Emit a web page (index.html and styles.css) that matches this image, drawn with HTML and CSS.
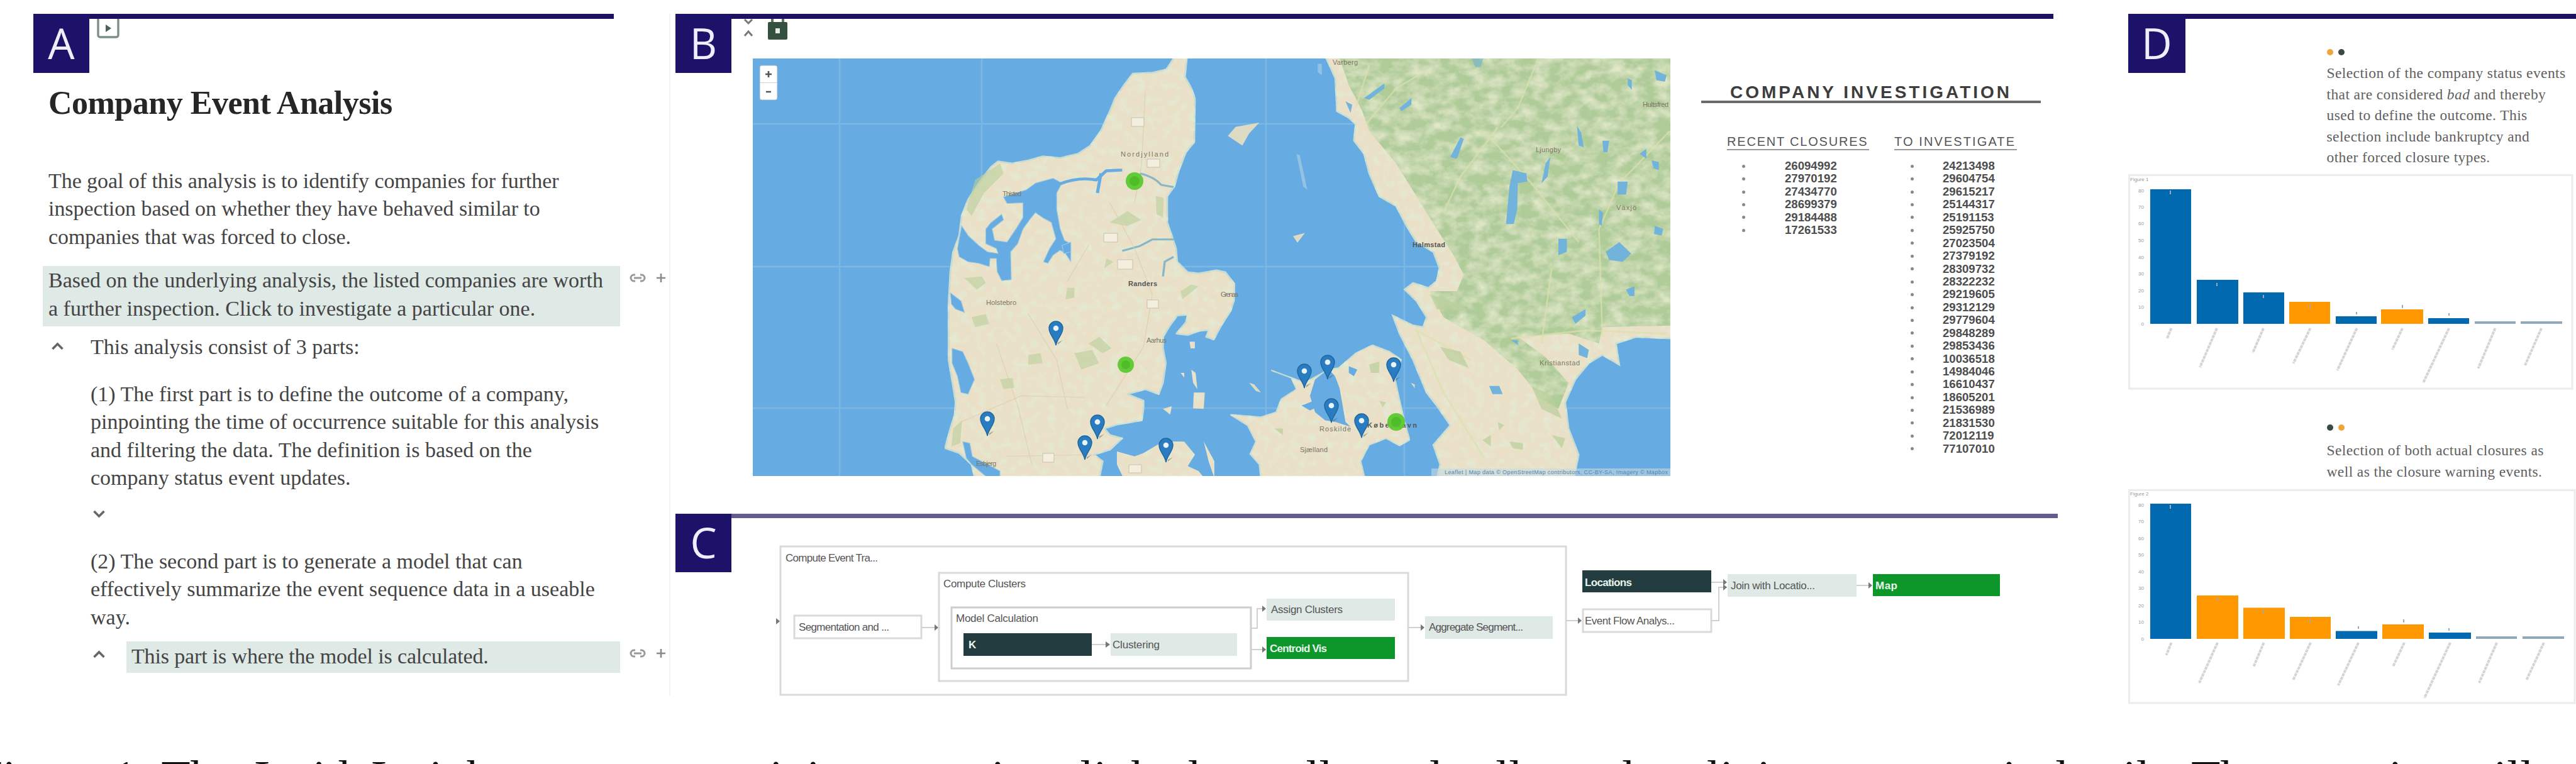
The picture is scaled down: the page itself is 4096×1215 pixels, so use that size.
FILE: index.html
```html
<!DOCTYPE html>
<html lang="en">
<head>
<meta charset="utf-8">
<title>InsideInsights</title>
<link rel="stylesheet" href="styles.css">
</head>
<body>
<svg class="defs" width="0" height="0">
  <defs>
    <symbol id="up" viewBox="0 0 20 13"><path d="M2 11 10 3l8 8" fill="none" stroke="#666" stroke-width="3.6"/></symbol>
    <symbol id="down" viewBox="0 0 20 13"><path d="M2 2l8 8 8-8" fill="none" stroke="#666" stroke-width="3.6"/></symbol>
    <symbol id="tools" viewBox="0 0 58 16">
      <path d="M9 3H7a5 5 0 0 0 0 10h2M17 3h2a5 5 0 0 1 0 10h-2M7 8h12" fill="none" stroke="#999" stroke-width="3"/>
      <path d="M43 8h14M50 1v14" stroke="#8a8a8a" stroke-width="2.6"/>
    </symbol>
    <symbol id="pin" viewBox="-12 -13 24 40" overflow="visible">
      <path d="M3 25 11 18 3 22z" fill="#555" opacity=".45"/>
      <path d="M0 26C-2 15-11 9-11-1a11 11 0 0 1 22 0C11 9 2 15 0 26z" fill="#2a7cc0" stroke="#1f669f" stroke-width="1.4"/>
      <circle r="4.3" cy="-1" fill="#e8f3fb"/>
    </symbol>
  </defs>
</svg>
<main class="page">
  <section class="panel-a">
    <header class="bar"><span class="tag">A</span>
      <svg class="play" viewBox="0 0 36 32"><rect x="2" y="-3" width="32" height="32" rx="3" fill="none" stroke="#7b8f86" stroke-width="3.4"/><path d="M14 9l9 6-9 6z" fill="#4d6359"/></svg>
    </header>
    <h1>Company Event Analysis</h1>
    <p class="intro">The goal of this analysis is to identify companies for further<br>inspection based on whether they have behaved similar to<br>companies that was forced to close.</p>
    <div class="row listed"><p class="hl">Based on the underlying analysis, the listed companies are worth<br>a further inspection. Click to investigate a particular one.</p><svg class="tools"><use href="#tools"/></svg></div>
    <div class="row parts"><svg class="chev"><use href="#up"/></svg><p>This analysis consist of 3 parts:</p></div>
    <p class="first">(1) The first part is to define the outcome of a company,<br>pinpointing the time of occurrence suitable for this analysis<br>and filtering the data. The definition is based on the<br>company status event updates.</p>
    <div class="fold"><svg class="chev"><use href="#down"/></svg></div>
    <p class="second">(2) The second part is to generate a model that can<br>effectively summarize the event sequence data in a useable<br>way.</p>
    <div class="row model"><svg class="chev"><use href="#up"/></svg><p class="hl">This part is where the model is calculated.</p><svg class="tools"><use href="#tools"/></svg></div>
  </section>

  <div class="middle">
    <section class="panel-b">
      <header class="bar"><span class="tag">B</span>
        <svg class="lock" viewBox="1180 31 76 34">
          <path d="M1184 32l6 6 6-6M1184 58l6-7 6 7" fill="none" stroke="#777" stroke-width="3"/>
          <path d="M1228 38v-9M1245 38v-9" stroke="#5d7568" stroke-width="4"/>
          <rect x="1221" y="36" width="31" height="28" rx="2" fill="#34513f"/><rect x="1233" y="46" width="7" height="8" fill="#e3ece6"/>
        </svg>
      </header>
      <div class="content">
        <svg class="map" viewBox="1197 93 1459 664">
          <defs>
            <filter id="forest" x="0" y="0" width="100%" height="100%">
              <feTurbulence type="fractalNoise" baseFrequency=".022 .03" numOctaves="5" seed="8"/>
              <feColorMatrix values="0 0 0 0 .84  0 0 0 0 .86  0 0 0 0 .65  1.5 0 0 0 -.5"/>
              <feComposite in2="SourceAlpha" operator="in" result="n"/>
              <feMerge><feMergeNode in="SourceGraphic"/><feMergeNode in="n"/></feMerge>
            </filter>
            <filter id="fields" x="0" y="0" width="100%" height="100%">
              <feTurbulence type="fractalNoise" baseFrequency=".04" numOctaves="5" seed="21"/>
              <feColorMatrix values="0 0 0 0 .76  0 0 0 0 .83  0 0 0 0 .66  0 2.4 0 0 -1.1"/>
              <feComposite in2="SourceAlpha" operator="in" result="n"/>
              <feMerge><feMergeNode in="SourceGraphic"/><feMergeNode in="n"/></feMerge>
            </filter>
          </defs>
          <rect x="1197" y="93" width="1459" height="664" fill="#66abe1"/>
          <path d="M1335 93v664M1561 93v664M2013 93v664M2233 93v664M1197 197h1459M1197 424h1459M1197 649h1459" stroke="#7db7e4" stroke-width="2.5"/>
          <g transform="matrix(.5635 0 0 .5202 1060.3 0)">
            <path filter="url(#fields)" fill="#eae0c7" stroke="#c5dcd4" stroke-width="5" stroke-linejoin="round" d="M1435 170H1468L1462 235 1480 270 1490 300 1488 435 1465 465 1445 520 1432 570 1412 600V680L1425 720 1437 760 1440 800 1470 832 1500 836 1552 826 1576 832 1603 870 1600 920 1591 950 1567 990 1543 1038 1522 1030 1530 1008 1500 1012 1470 1024 1438 1020 1465 985 1470 962 1440 965 1420 995 1400 1030V1065L1408 1110 1400 1170 1388 1205 1350 1190 1300 1205 1345 1225V1250L1340 1285 1270 1298 1235 1310 1250 1330 1285 1340 1250 1375 1205 1390 1230 1410 1220 1465H870L860 1420 825 1385 785 1370 800 1310 812 1270 815 1230 803 1150 795 1100V930L800 830 808 770 825 720 832 660 850 610 880 560 915 510 935 493 975 500 1020 490 1060 478 1110 483 1160 470 1195 445 1225 400 1250 340 1265 300 1290 260 1315 225 1370 222 1410 212Z"/>
            <g fill="#b9cf9a" opacity=".6"><path d="M870 550 940 500 950 530 895 590 860 660 845 640zM1250 680l50-35 38 28-40 18zM1190 1050l30-20 35 35-25 15zM840 850l50-5 10 20-25 20zM860 970l40-10 10 30-40 10zM1020 1085l35-5 5 30-40 5zM1150 1080l50-10 20 40-50 20zM940 1160l35-5 5 30-30 5zM808 1310l25-25-5 70-25 10zM1380 600l22 5-2 60-18-10zM1450 890l30-20 20 5-45 40zM1240 790l20 10-25 20zM1130 880l20 0 0 30-25 5z"/></g>
            <g fill="#66abe1" stroke="#9ccbe0" stroke-width="2" stroke-linejoin="round">
              <path d="M1040 560 1090 545 1115 560 1100 590V640L1110 700 1122 735 1140 745V800L1125 775 1110 765 1090 780 1075 805 1063 800 1080 760 1098 730 1085 680 1060 665 1040 650 1025 670 1005 700 990 745 970 770 972 855 945 858 932 830 930 790 912 790 910 815 880 805 850 800 825 785 820 760 832 690 850 720 880 750 905 770 935 775 930 760 900 745V700L915 680 945 655 950 672 918 700 925 735 960 740 985 700 1005 665V620L960 622 950 602 985 590 1015 580Z"/>
              <path d="M805 1065 835 1075 850 1110 868 1160 850 1205 830 1200 820 1150 805 1110ZM800 895 830 920 840 955 815 945 803 930ZM835 1350 855 1355 862 1395 940 1440 940 1460 900 1456 860 1420 845 1400ZM1115 750 1140 740 1140 770 1120 775Z"/>
              <path d="M1110 562Q1160 540 1212 550L1240 522 1285 520" fill="none" stroke="#66abe1" stroke-width="9"/><path d="M1225 530 1215 590" stroke="#66abe1" stroke-width="9"/><path d="M1335 530Q1375 540 1395 565L1430 572M1285 767 1335 752 1370 732 1432 732M1400 845 1405 800 1430 785" fill="none" stroke="#86b7c8" stroke-width="6"/>
            </g>
            <path filter="url(#fields)" fill="#eae0c7" d="M1270 1380 1320 1395 1345 1385 1400 1350 1460 1350 1490 1390 1470 1425 1500 1440 1520 1465H1290L1270 1420ZM1487 1200 1518 1200 1515 1250 1485 1248ZM1480 1130l12 10 5 50-12-20zM1475 1045l15 0 0 20-12 0zM1400 1250l25-8-5 25zM1515 1350l30 60 0 50-15-45zM1450 1140l10 0 0 15z"/>
            <path d="M1020 960L1100 1100 1130 1250M1250 620L1320 760 1370 900 1345 1060 1240 1240M830 1290L1000 1210 1180 1215M1350 280L1340 500 1320 620M1190 750L1130 860M930 1050L990 1240 1030 1420M1200 1390L960 1395" fill="none" stroke="#dccdae" stroke-width="2.500" opacity=".7"/>
          </g>
          <g transform="matrix(.5375 0 0 .5202 1876 0)">
            <path filter="url(#fields)" fill="#eae0c7" stroke="#c5dcd4" stroke-width="5" d="M430 170 460 240 465 340 500 360 520 380 515 430 545 470 560 530 590 600 640 630 670 690 700 740 750 770 768 820 760 860 735 880 690 865 665 885 700 920 730 970 720 1000 690 995 630 965 650 1020 690 1100 730 1200 760 1240 800 1300 750 1360 770 1420 760 1465H1165L1180 1390 1150 1310 1140 1230 1170 1160 1210 1110 1250 1085 1300 1115 1290 1050 1350 1030 1460 1035V170Z"/>
            <path filter="url(#forest)" fill="#aecb98" d="M470 170 500 260 540 340 560 400 640 500 700 600 760 700 810 780 840 840 820 890 740 890 780 970 900 1040 1000 1130 1070 1220 1120 1250 1150 1170 1080 1090 1000 1030 1150 1020 1240 1050 1250 1000 1460 995V170Z"/>
            <path d="M550 380 640 270 730 215M940 390 830 540 780 650M900 400 1040 560 1180 740M1450 400 1300 560 1240 700 1250 1030M860 1100 700 1010 780 1200 900 1400M1100 820 1070 1050M560 200L520 330M1060 180L1000 330 950 390M1440 1020L1200 1010 980 1035" fill="none" stroke="#dcdfae" stroke-width="5" opacity=".7"/>
            <g fill="#72b3dc"><path d="M965 685 975 570 985 520 1025 530 1028 555 1000 560 998 640 988 685zM1260 770 1300 740 1335 775 1310 800 1270 795zM1175 385l12 20 8 45-15-5zM1250 430l20 0-5 35-12 0zM1120 730l25 0 0 40-25 10zM1295 555l30 0-5 40-25 0zM1160 970l40-25 0 20-30 25zM1405 690l25 10-5 20-22-5zM1395 490l22 5 0 25-15-5zM1405 215l35 15-5 20-25-5zM545 300l60-45 0 15-45 35zM650 330l35-30 0 20-30 20zM800 480l30-60 10 5-20 60zM1070 560l12-60 14-20-8 60zM1240 640l12 10-4 40-8-5zM1325 240l12 5 0 30-12-15zM1320 885l25-10 0 30-15 0zM490 310l20 10-5 25zM915 1180l30 0 10 25-30 0zM1180 1050l30 20-5 25-25-10zM980 1040l20 0 0 15zM1360 470l20-15 0 30z"/></g>
            <path fill="#66abe1" d="M860 170h40l-10 35h-15z" opacity=".5"/>
            <path filter="url(#fields)" fill="#eae0c7" stroke="#c5dcd4" stroke-width="4" d="M270 1132 330 1155 345 1190 300 1220 285 1260 240 1275 150 1268 200 1300 225 1350 208 1388 235 1420 240 1465H548L535 1410 560 1360 610 1340 650 1362 680 1345 665 1290 645 1200 635 1150 655 1100 620 1075 570 1055 520 1080 470 1125 440 1130 405 1150 370 1170Z"/>
            <g fill="#66abe1"><path d="M400 1160 440 1128 468 1160 480 1230 490 1290 505 1305 460 1290 430 1285 400 1260 385 1210zM360 1240l30-12 20 15-25 12zM500 1120l25 10-10 20-15-10z"/></g>
            <path d="M462 1145 488 1215 500 1290" stroke="#e9e0c5" stroke-width="9" fill="none"/>
            <path fill="#dcdcc4" d="M142 415 165 388 235 375 205 408 185 445zM335 722l35-10-22 30zM205 1170l15 5 20 25-15-5zM683 1170l12 5 0 12z"/><path fill="#93c3e4" d="M345 470l10 5 22 105-12-10zM408 195l12 0 0 35-12-10z"/>
            <g fill="#b9cf9a" opacity=".7"><path d="M770 1060l60 15 25 50-60-25zM740 900l100 35 0 15-80-5zM940 1290l20 10-15 15zM895 1345l25-15 0 35zM975 1350l40 5 0 20-30-5zM560 1115l30-10 0 35-25 0zM590 1225l20 5-10 15zM1040 1180l60 30 30 70-60-30zM280 1310l25 0 0 20zM1100 1330l40 10-10 30z"/></g>
          </g>
          <g class="place">
            <text x="1782" y="249" textLength="76">Nordjylland</text><text x="1594" y="312" textLength="30">Thisted</text><text x="1794" y="455" textLength="46" class="city">Randers</text><text x="1568" y="485" textLength="48">Holstebro</text><text x="1823" y="545" textLength="32">Aarhus</text><text x="1552" y="741" textLength="32">Esbjerg</text>
            <text x="2246" y="393" textLength="52" class="city">Halmstad</text><text x="2442" y="242" textLength="40">Ljungby</text><text x="2570" y="334" textLength="32">Växjö</text><text x="2448" y="581" textLength="64">Kristianstad</text><text x="2612" y="170" textLength="41">Hultsfred</text><text x="2119" y="103" textLength="40">Varberg</text><text x="2174" y="680" class="city" textLength="79">København</text><text x="2098" y="686" textLength="50">Roskilde</text><text x="2067" y="719" textLength="44">Sjælland</text><text x="1941" y="472" textLength="28">Grenaa</text>
          </g>
          <g fill="#f4eede" stroke="#c9bfae"><path d="M1799 187h20v14h-20zM1824 253h20v13h-20zM1777 413h24v15h-24zM1824 477h18v13h-18zM1755 371h22v14h-22zM1658 721h18v14h-18zM1795 739h20v13h-20z"/></g>
          <path d="M2276 745h380v12h-380z" fill="#c7dbe3" opacity=".6"/>
          <g class="credit"><text x="2297" y="754" textLength="355">Leaflet | Map data © OpenStreetMap contributors, CC-BY-SA, Imagery © Mapbox</text></g>
          <g fill="#5bc92f" opacity=".95"><circle cx="1804" cy="288" r="14"/><circle cx="1790" cy="580" r="13"/><circle cx="2220" cy="671" r="14"/></g>
          <g fill="#4fbd27"><circle cx="1804" cy="288" r="8"/><circle cx="1790" cy="580" r="7"/><circle cx="2220" cy="671" r="8"/></g>
          <g>
            <use href="#pin" x="1667" y="510" width="24" height="40"/><use href="#pin" x="1558" y="654" width="24" height="40"/><use href="#pin" x="1733" y="659" width="24" height="40"/><use href="#pin" x="1713" y="692" width="24" height="40"/><use href="#pin" x="1842" y="696" width="24" height="40"/>
            <use href="#pin" x="2062" y="578" width="24" height="40"/><use href="#pin" x="2099" y="564" width="24" height="40"/><use href="#pin" x="2204" y="568" width="24" height="40"/><use href="#pin" x="2105" y="633" width="24" height="40"/><use href="#pin" x="2153" y="657" width="24" height="40"/>
          </g>
          <rect x="1208" y="104" width="28" height="55" rx="3" fill="#fff" stroke="#8fb4cf"/><path d="M1208 131.500h28" stroke="#ccd"/><path d="M1217 118h10M1222 113v10M1218 146h8" stroke="#555" stroke-width="2.600"/>
        </svg>
        <div class="invest">
          <h2>COMPANY INVESTIGATION</h2>
          <div class="lists">
            <div class="recent"><h3>RECENT CLOSURES</h3>
              <ul><li>26094992</li><li>27970192</li><li>27434770</li><li>28699379</li><li>29184488</li><li>17261533</li></ul></div>
            <div class="todo"><h3>TO INVESTIGATE</h3>
              <ul><li>24213498</li><li>29604754</li><li>29615217</li><li>25144317</li><li>25191153</li><li>25925750</li><li>27023504</li><li>27379192</li><li>28309732</li><li>28322232</li><li>29219605</li><li>29312129</li><li>29779604</li><li>29848289</li><li>29853436</li><li>10036518</li><li>14984046</li><li>16610437</li><li>18605201</li><li>21536989</li><li>21831530</li><li>72012119</li><li>77107010</li></ul></div>
          </div>
        </div>
      </div>
    </section>

    <section class="panel-c">
      <header class="bar"><span class="tag">C</span></header>
      <svg class="flow" viewBox="1230 860 1960 256">
        <g fill="none" stroke="#d9d9d9" stroke-width="3"><rect x="1241" y="870" width="1249" height="236"/><rect x="1493" y="912" width="746" height="172"/><rect x="1513" y="967" width="476" height="97" stroke="#cdcdcd"/><rect x="1263" y="980" width="202" height="36"/><rect x="2517" y="970" width="204" height="36"/></g>
        <g fill="none" stroke="#d0d0d0" stroke-width="2"><path d="M1465 999h26M1736 1026h28M1989 1000h10V969h13M1989 1034h24M2239 999h25M2490 988h24M2721 988h12V935h13M2721 927h24M2952 932h24"/></g>
        <g fill="#777"><path d="M1234 984l6 5-6 5zM1486 994l6 5-6 5zM1758 1021l7 5-7 5zM2007 964l6 5-6 5zM2007 1029l6 5-6 5zM2259 994l6 5-6 5zM2509 983l6 5-6 5zM2740 922l6 5-6 5zM2740 930l6 5-6 5zM2971 927l6 5-6 5z"/></g>
        <g fill="#dfe9e6"><rect x="1766" y="1008" width="201" height="36"/><rect x="2014" y="953" width="204" height="35"/><rect x="2266" y="981" width="203" height="36"/><rect x="2747" y="914" width="205" height="36"/></g>
        <g fill="#233c40"><rect x="1532" y="1008" width="204" height="36"/><rect x="2516" y="908" width="205" height="35"/></g>
        <g fill="#0d962a"><rect x="2014" y="1014" width="204" height="35"/><rect x="2978" y="914" width="202" height="35"/></g>
        <g class="node"><text x="1249" y="894" textLength="147">Compute Event Tra...</text><text x="1500" y="935" textLength="131">Compute Clusters</text><text x="1520" y="990" textLength="131">Model Calculation</text><text x="1270" y="1004" textLength="144">Segmentation and ...</text><text x="1769" y="1032" textLength="75">Clustering</text><text x="2021" y="976" textLength="114">Assign Clusters</text><text x="2272" y="1004" textLength="150">Aggregate Segment...</text><text x="2752" y="938" textLength="134">Join with Locatio...</text><text x="2520" y="994" textLength="143">Event Flow Analys...</text></g>
        <g class="node light"><text x="1540" y="1032">K</text><text x="2520" y="933" textLength="75">Locations</text><text x="2982" y="938" textLength="35">Map</text><text x="2019" y="1038" textLength="91">Centroid Vis</text></g>
      </svg>
    </section>
  </div>

  <section class="panel-d">
    <header class="bar"><span class="tag">D</span></header>
    <div class="note one"><div class="dots"><i class="or"></i><i></i></div>
      <p>Selection of the company status events<br>that are considered <em>bad</em> and thereby<br>used to define the outcome. This<br>selection include bankruptcy and<br>other forced closure types.</p></div>
    <svg class="chart c1" viewBox="3384 277 712 343">
      <path d="M3385.500 278.500H4090V618H3385.500z" fill="none" stroke="#ececec" stroke-width="3"/>
      <text class="fig" x="3387" y="288">Figure 1</text>
      <g fill="#0069b0"><path d="M3419 301h65v214h-65zM3493 445h66v70h-66zM3567 465h65v50h-65zM3714 503h65v12h-65zM3861 506h65v9h-65z"/></g>
      <g fill="#ff9700"><path d="M3640 480h65v35h-65zM3786 492h67v23h-67z"/></g>
      <path d="M3935 511h65v4h-65zM4008 511h66v4h-66z" fill="#8fa9b8"/>
      <g class="tick"><text x="3409" y="306">80</text><text x="3409" y="332">70</text><text x="3409" y="358">60</text><text x="3409" y="385">50</text><text x="3409" y="412">40</text><text x="3409" y="438">30</text><text x="3409" y="465">20</text><text x="3409" y="491">10</text><text x="3409" y="518">0</text></g>
      <path d="M3452.500 522l-7 17M3525 522l-27 62M3599 522l-17 39M3673.500 522l-27 56M3747.500 522l-31 67M3820 522l-16 34M3894 522l-41 87M3967.500 522l-27 64M4041 522l-26 59" stroke="#d5d5d5" stroke-width="4" stroke-dasharray="5 1"/>
      <path d="M3451 303v6M3525 450v5M3599 469v5M3673 484v5M3747 496v4M3820 485v5M3894 498v4" stroke="#9ab" stroke-width="2"/>
    </svg>
    <div class="note two"><div class="dots"><i></i><i class="or"></i></div>
      <p>Selection of both actual closures as<br>well as the closure warning events.</p></div>
    <svg class="chart c2" viewBox="3384 777 712 345">
      <path d="M3385.500 779.500H4094V1118H3385.500z" fill="none" stroke="#ececec" stroke-width="3"/>
      <text class="fig" x="3387" y="788">Figure 2</text>
      <g fill="#0069b0"><path d="M3419 801h65v215h-65zM3714 1003.500h66v12.500h-66zM3862 1006h67v10h-67z"/></g>
      <g fill="#ff9700"><path d="M3493 947h66v69h-66zM3567 966.500h66v49.500h-66zM3641 981h65v35h-65zM3788 993h66v23h-66z"/></g>
      <path d="M3937 1012h65v4h-65zM4011 1012h66v4h-66z" fill="#8fa9b8"/>
      <g class="tick"><text x="3409" y="806">80</text><text x="3409" y="832">70</text><text x="3409" y="859">60</text><text x="3409" y="885">50</text><text x="3409" y="912">40</text><text x="3409" y="938">30</text><text x="3409" y="966">20</text><text x="3409" y="992">10</text><text x="3409" y="1019">0</text></g>
      <path d="M3452.500 1022l-8 20M3526 1022l-29 64M3599.500 1022l-16 38M3674 1022l-28 60M3750 1022l-32 68M3823 1022l-18 38M3896 1022l-41 88M3970 1022l-28 64M4045 1022l-28 60" stroke="#d5d5d5" stroke-width="4" stroke-dasharray="5 1"/>
      <path d="M3451 803v6M3526 951v5M3599 970v5M3673 985v5M3750 996v4M3822 985v5M3894 999v4" stroke="#9ab" stroke-width="2"/>
    </svg>
  </section>
</main>
<footer class="caption"><span class="w1">Figure 1: The</span><span class="w2">InsideInsights</span><span class="w3">system containing</span><span class="w4">narratives linked to collapsed cells, and outlining presentation</span><span class="w5">details. The narrative will</span></footer>
</body>
</html>
```
FILE: styles.css
```css
* { box-sizing: border-box; margin: 0; padding: 0; }
html, body { width: 4096px; height: 1215px; overflow: hidden; background: #fff; }
body { font-family: "Liberation Serif", "Times New Roman", serif; color: #444; }
svg { display: block; flex: none; }
.defs { position: absolute; }
.page { display: flex; height: 1207px; overflow: hidden; padding-top: 22px; }
.bar { height: 94.5px; display: flex; align-items: flex-start; border-top: 8.5px solid #1d1260; }
.tag { width: 89px; height: 94.5px; margin-top: -8.500px; background: #1d1269; color: #f0eefc; font: 400 67px/93px "Open Sans", "Noto Sans", sans-serif; text-align: center; flex: none; }

/* narrative */
.panel-a { width: 1066px; flex: none; height: 1085px; padding-left: 53px; border-right: 2px solid #f3f3f6; }
.panel-a .bar { width: 923px; }
.play { width: 36px; height: 32px; margin-left: 12px; }
.panel-a h1 { font-size: 52px; line-height: 60px; margin: 17px 0 72px 24px; color: #262626; white-space: nowrap; letter-spacing: -.5px; }
.panel-a p { font-size: 34px; line-height: 44.500px; white-space: nowrap; letter-spacing: 0; }
.panel-a .intro { margin-left: 24px; letter-spacing: -.07px; }
.row { display: flex; }
.hl { background: #dfe9e6; }
.listed { margin: 24px 0 0 15px; }
.listed .hl { width: 918px; height: 96px; padding: 1px 0 0 9px; }
.tools { width: 58px; height: 16px; margin: 11px 0 0 15px; }
.parts { margin: 11px 0 0 28px; }
.chev { width: 21px; height: 13px; margin-top: 14px; }
.parts p { margin-left: 42px; }
.first, .second { margin-left: 91px; }
.first { margin-top: 30px; }
.fold { height: 88px; padding: 14px 0 0 94px; }
.model { margin: 16px 0 0 94px; }
.panel-a .model .hl { width: 785px; height: 50px; margin-left: 33px; padding: 2px 0 0 8px; letter-spacing: -.15px; }

/* map and company lists */
.middle { width: 2318px; flex: none; padding-left: 8px; }
.panel-b { height: 794px; }
.panel-b .bar { width: 2191px; height: 71px; }
.lock { width: 76px; height: 34px; margin-left: 17px; }
.content { display: flex; padding-left: 123px; }
.map { width: 1459px; height: 664px; }
.place { font: 11px "Liberation Sans", sans-serif; fill: #7d7668; }
.place .city { font-weight: bold; fill: #555; }
.credit { font: 9px "Liberation Sans", sans-serif; fill: #4e86b3; }
.invest { width: 540px; margin: 37px 0 0 49px; font-family: "Liberation Sans", Arial, sans-serif; }
.invest h2 { height: 34px; border-bottom: 4px solid #6d6a6d; text-align: center; font-size: 28px; line-height: 33px; color: #3d3d3d; letter-spacing: 4px; white-space: nowrap; }
.lists { display: flex; padding-left: 41px; gap: 40px; margin-top: 49px; }
.invest h3 { font-size: 20px; line-height: 24px; height: 26px; font-weight: normal; color: #555; letter-spacing: 1.800px; border-bottom: 2px solid #999; white-space: nowrap; }
.recent { width: 226px; }
.todo { width: 195px; }
.invest .todo h3 { letter-spacing: 2.1px; }
.invest ul { list-style: none; margin-top: 15px; font-size: 18.600px; line-height: 20.430px; font-weight: bold; color: #4d4d4d; }
.invest li { display: flex; align-items: center; }
.invest li::before { content: ""; width: 5px; height: 5px; background: #888; margin: 0 63px 0 24px; border-radius: 3px; }
.todo li::before { margin: 0 46px 0 26px; }

/* computation graph */
.panel-c .bar { width: 2198px; border-top-width: 7px; border-color: #655b91; margin-top: 1px; height: 44px; }
.panel-c .tag { margin-top: -7px; height: 93px; line-height: 91px; }
.flow { width: 1960px; height: 256px; margin: -2px 0 0 156px; }
.node { font: 17px "Liberation Sans", Arial, sans-serif; fill: #555; }
.light { fill: #e8f5ee; font-weight: bold; }

/* selections */
.panel-d { width: 712px; flex: none; margin-left: -.500px; }
.panel-d .bar { height: 0; }
.panel-d .tag { width: 91.500px; }
.note { padding-left: 316px; }
.note p { font-size: 23.500px; line-height: 33.500px; color: #606060; white-space: nowrap; letter-spacing: .4px; }
.dots { display: flex; gap: 8px; }
.dots i { width: 10px; height: 10px; border-radius: 5px; background: #3a4b43; }
.dots .or { background: #eda63a; }
.one { height: 247px; padding-top: 48px; }
.one p { margin-top: 12px; }
.two { height: 157px; padding-top: 55px; }
.two p { margin-top: 15px; }
.chart { width: 712px; }
.c1 { height: 343px; }
.c2 { height: 345px; }
.fig { font: 8px "Liberation Sans", sans-serif; fill: #999; }
.tick { font: 8px "Liberation Sans", sans-serif; fill: #999; text-anchor: end; }

.caption { display: flex; height: 8px; overflow: hidden; font-size: 76px; line-height: 80px; color: #111; white-space: nowrap; margin-left: -38px; }
.caption span { flex: none; margin-top: -11px; }
.w1 { width: 442px; }
.w2 { width: 425px; }
.w3 { width: 570px; }
.w4 { width: 1850px; }
```
